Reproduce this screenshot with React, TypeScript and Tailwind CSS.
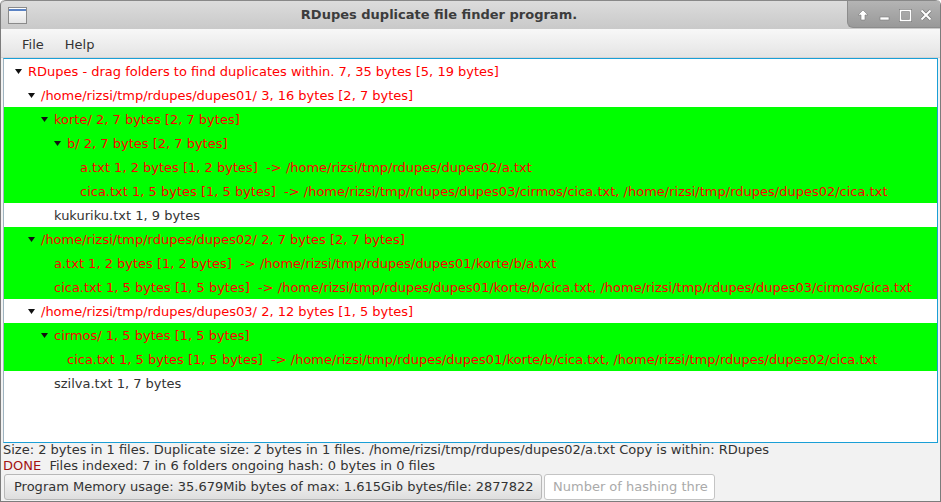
import React from "react";

type Row = {
  level: number;
  text: string;
  expanded?: boolean;
  dup: boolean;
  red: boolean;
};

const ROWS: Row[] = [
  { level: 0, expanded: true, dup: false, red: true, text: "RDupes - drag folders to find duplicates within. 7, 35 bytes [5, 19 bytes]" },
  { level: 1, expanded: true, dup: false, red: true, text: "/home/rizsi/tmp/rdupes/dupes01/ 3, 16 bytes [2, 7 bytes]" },
  { level: 2, expanded: true, dup: true, red: true, text: "korte/ 2, 7 bytes [2, 7 bytes]" },
  { level: 3, expanded: true, dup: true, red: true, text: "b/ 2, 7 bytes [2, 7 bytes]" },
  { level: 4, dup: true, red: true, text: "a.txt 1, 2 bytes [1, 2 bytes]  -> /home/rizsi/tmp/rdupes/dupes02/a.txt" },
  { level: 4, dup: true, red: true, text: "cica.txt 1, 5 bytes [1, 5 bytes]  -> /home/rizsi/tmp/rdupes/dupes03/cirmos/cica.txt, /home/rizsi/tmp/rdupes/dupes02/cica.txt" },
  { level: 2, dup: false, red: false, text: "kukuriku.txt 1, 9 bytes" },
  { level: 1, expanded: true, dup: true, red: true, text: "/home/rizsi/tmp/rdupes/dupes02/ 2, 7 bytes [2, 7 bytes]" },
  { level: 2, dup: true, red: true, text: "a.txt 1, 2 bytes [1, 2 bytes]  -> /home/rizsi/tmp/rdupes/dupes01/korte/b/a.txt" },
  { level: 2, dup: true, red: true, text: "cica.txt 1, 5 bytes [1, 5 bytes]  -> /home/rizsi/tmp/rdupes/dupes01/korte/b/cica.txt, /home/rizsi/tmp/rdupes/dupes03/cirmos/cica.txt" },
  { level: 1, expanded: true, dup: false, red: true, text: "/home/rizsi/tmp/rdupes/dupes03/ 2, 12 bytes [1, 5 bytes]" },
  { level: 2, expanded: true, dup: true, red: true, text: "cirmos/ 1, 5 bytes [1, 5 bytes]" },
  { level: 3, dup: true, red: true, text: "cica.txt 1, 5 bytes [1, 5 bytes]  -> /home/rizsi/tmp/rdupes/dupes01/korte/b/cica.txt, /home/rizsi/tmp/rdupes/dupes02/cica.txt" },
  { level: 2, dup: false, red: false, text: "szilva.txt 1, 7 bytes" },
];

const Arrow = () => (
  <svg width="7" height="5" viewBox="0 0 7 5" className="shrink-0">
    <polygon points="0,0 7,0 3.5,5" fill="#111" />
  </svg>
);

const TreeRow = ({ row }: { row: Row }) => {
  return (
    <div
      className={`flex items-center h-[24px] pt-[1px] whitespace-pre ${row.dup ? "bg-[#00ff00]" : "bg-white"} ${row.red ? "text-[#ff0000]" : "text-[#333333]"}`}
      style={{ paddingLeft: 11 + 13 * row.level }}
    >
      <div className="w-[13px] flex items-center">{row.expanded ? <Arrow /> : null}</div>
      <span>{row.text}</span>
    </div>
  );
};

const TitleButtons = () => (
  <div className="h-[27px] w-[93px] rounded-bl-[6px] bg-gradient-to-b from-[#b4b4b4] to-[#999999] border-l border-b border-[#8c8c8c] flex items-center justify-around px-[4px] pt-[2px]">
    <svg width="14" height="14" viewBox="0 0 14 14">
      <path d="M7 2 L12 7 L9 7 L9 12 L5 12 L5 7 L2 7 Z" fill="#ffffff" stroke="#7a7a7a" strokeWidth="0.6" />
    </svg>
    <svg width="14" height="14" viewBox="0 0 14 14">
      <rect x="3" y="9" width="9" height="3" fill="#ffffff" stroke="#7a7a7a" strokeWidth="0.6" />
    </svg>
    <svg width="14" height="14" viewBox="0 0 14 14">
      <rect x="2.5" y="2.5" width="10" height="10" fill="none" stroke="#7a7a7a" strokeWidth="3" />
      <rect x="2.5" y="2.5" width="10" height="10" fill="none" stroke="#ffffff" strokeWidth="1.6" />
    </svg>
    <svg width="14" height="14" viewBox="0 0 14 14">
      <path d="M2.5 2.5 L11.5 11.5 M11.5 2.5 L2.5 11.5" stroke="#7a7a7a" strokeWidth="3.4" />
      <path d="M2.5 2.5 L11.5 11.5 M11.5 2.5 L2.5 11.5" stroke="#ffffff" strokeWidth="2" />
    </svg>
  </div>
);

export default function App() {
  return (
    <div
      className="w-[941px] h-[502px] overflow-hidden bg-[#f2f2f2] text-[13px] text-[#333333] flex flex-col border-x border-b border-[#7c7c7c] rounded-t-[5px]"
      style={{ fontFamily: '"DejaVu Sans", sans-serif' }}
    >
      {/* title bar */}
      <div className="h-[29px] shrink-0 flex items-start bg-gradient-to-b from-[#dcdcdc] to-[#c9c9c9] border-t border-[#888888] rounded-t-[5px]">
        <div className="w-[30px] h-full flex items-center justify-center pl-[2px]">
          <div className="w-[19px] h-[17px] border border-[#8a8a8a] bg-gradient-to-b from-[#ffffff] to-[#e4e4e4] flex flex-col">
            <div className="h-[2px] bg-[#5b83c4] mt-[1px]" />
          </div>
        </div>
        <div className="flex-1 h-full flex items-center justify-center font-bold text-[#3c3c3c] pb-[1px]">
          RDupes duplicate file finder program.
        </div>
        <TitleButtons />
      </div>

      {/* menu bar */}
      <div className="h-[29px] shrink-0 flex items-center gap-[21px] pl-[21px] pt-[3px] bg-gradient-to-b from-[#f8f8f8] to-[#e4e4e4] border-b border-[#d4d4d4]">
        <span>File</span>
        <span>Help</span>
      </div>

      {/* tree */}
      <div className="h-[385px] shrink-0 mx-[2px] border border-[#1a9fd6] border-l-[#9fb4c0] bg-white overflow-hidden">
        {ROWS.map((row, i) => (
          <TreeRow key={i} row={row} />
        ))}
      </div>

      {/* status */}
      <div className="pl-[2px] leading-[16px] -mt-[1px]">
        <div className="whitespace-pre">
          Size: 2 bytes in 1 files. Duplicate size: 2 bytes in 1 files. /home/rizsi/tmp/rdupes/dupes02/a.txt Copy is within: RDupes
        </div>
        <div className="whitespace-pre">
          <span className="text-[#a31212]">DONE</span>  Files indexed: 7 in 6 folders ongoing hash: 0 bytes in 0 files
        </div>
      </div>

      {/* bottom controls */}
      <div className="flex items-center gap-[2px] px-[3px]">
        <div className="h-[26px] w-[538px] flex items-center pl-[9px] rounded-[3px] border border-[#b8b8b8] bg-gradient-to-b from-[#f7f7f7] to-[#dedede] whitespace-pre">
          Program Memory usage: 35.679Mib bytes of max: 1.615Gib bytes/file: 2877822
        </div>
        <div className="h-[26px] w-[171px] flex items-center pl-[8px] rounded-[3px] border border-[#c4c4c4] bg-white text-[#aaaaaa] whitespace-pre overflow-hidden">
          Number of hashing thre
        </div>
      </div>
    </div>
  );
}
